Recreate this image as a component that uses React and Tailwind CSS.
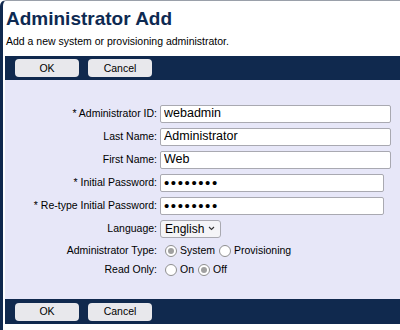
import React from 'react';

const font = { fontFamily: '"Liberation Sans", Arial, Helvetica, sans-serif' };

function Toolbar({ tall }) {
  return (
    <div className={`${tall ? 'h-[25px]' : 'h-[24px]'} bg-[#10294e] flex items-center pl-[10px] gap-[9px]`}>
      <button className="w-[64px] h-[18px] rounded-[4px] bg-[#e8e8ec] text-[10.5px] text-black leading-none">OK</button>
      <button className="w-[64px] h-[18px] rounded-[4px] bg-[#e8e8ec] text-[10.5px] text-black leading-none">Cancel</button>
    </div>
  );
}

function Label({ children }) {
  return <div className="w-[155px] pr-[3px] text-right text-[10.5px] text-black">{children}</div>;
}

function TextRow({ label, value, width, password }) {
  return (
    <div className="flex items-center h-[23px]">
      <Label>{label}</Label>
      <input
        type="text"
        readOnly
        value={password ? '••••••••' : value}
        className={`${width} h-[18px] border border-[#a9a9b1] rounded-[2px] bg-white px-[3px] text-black outline-none ${
          password ? 'text-[15px] tracking-[1.6px] leading-none' : 'text-[12.5px]'
        }`}
        style={font}
      />
    </div>
  );
}

function Radio({ checked, label }) {
  return (
    <span className="flex items-center gap-[3px] mr-[4px]">
      <span className="w-[12px] h-[12px] rounded-full border border-[#8f8f8f] bg-white flex items-center justify-center">
        {checked && <span className="w-[6px] h-[6px] rounded-full bg-[#a0a0a0]" />}
      </span>
      <span className="text-[10.5px] text-black">{label}</span>
    </span>
  );
}

export default function App() {
  return (
    <div
      className="w-[400px] h-[330px] bg-white overflow-hidden border-l-[3px] border-l-[#10294e] border-t border-t-[#9aa0aa] rounded-tl-[6px] pl-[2px]"
      style={font}
    >
      <h1 className="mt-[7px] pl-[1px] text-[19px] leading-[22px] font-bold text-[#0e2a52]">Administrator Add</h1>
      <p className="mt-[4px] pl-[1px] text-[10.5px] leading-[14px] text-black">Add a new system or provisioning administrator.</p>
      <div className="mt-[8px]">
        <Toolbar />
      </div>

      <div className="h-[219px] bg-[#e7e7f8] pt-[22px]">
        <TextRow label="* Administrator ID:" value="webadmin" width="w-[231px]" />
        <TextRow label="Last Name:" value="Administrator" width="w-[231px]" />
        <TextRow label="First Name:" value="Web" width="w-[231px]" />
        <TextRow label="* Initial Password:" value="password" width="w-[224px]" password />
        <TextRow label="* Re-type Initial Password:" value="password" width="w-[224px]" password />

        <div className="flex items-center h-[23px]">
          <Label>Language:</Label>
          <div className="w-[61px] h-[18px] border border-[#a9a9b1] rounded-[3px] bg-[#f4f4f7] flex items-center justify-between pl-[4px] pr-[5px]">
            <span className="text-[12px] text-black">English</span>
            <svg width="7" height="5" viewBox="0 0 7 5" fill="none">
              <path d="M1 1l2.5 2.5L6 1" stroke="#333" strokeWidth="1.1" />
            </svg>
          </div>
        </div>

        <div className="flex items-center h-[19px] mt-[1px]">
          <Label>Administrator Type:</Label>
          <div className="flex items-center pl-[5px]">
            <Radio checked label="System" />
            <Radio label="Provisioning" />
          </div>
        </div>

        <div className="flex items-center h-[19px]">
          <Label>Read Only:</Label>
          <div className="flex items-center pl-[5px]">
            <Radio label="On" />
            <Radio checked label="Off" />
          </div>
        </div>
      </div>

      <Toolbar tall />
    </div>
  );
}
